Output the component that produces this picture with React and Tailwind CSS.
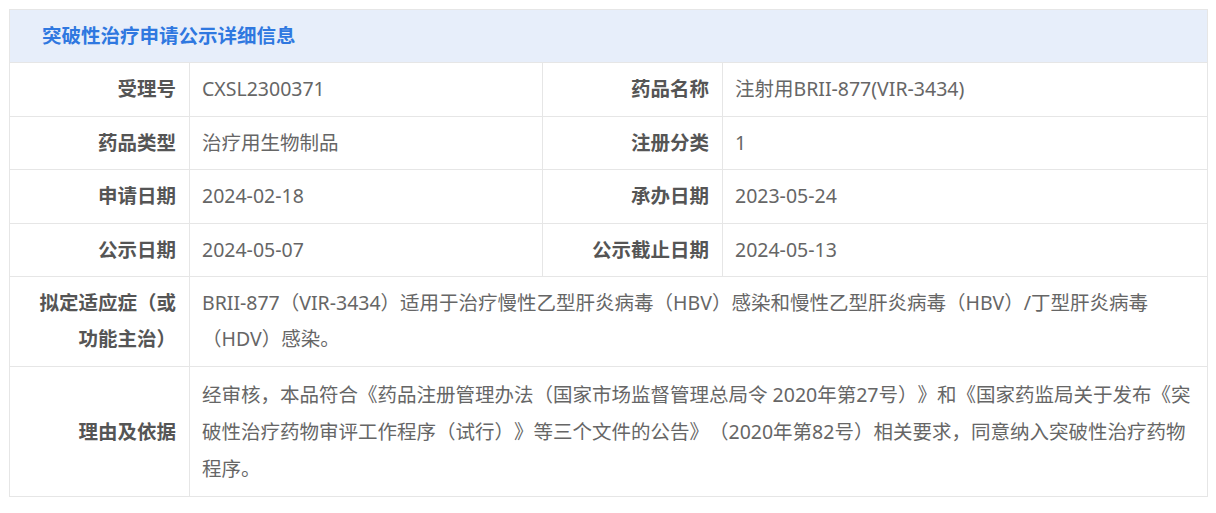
const font = { fontFamily: '"Noto Sans", "Noto Sans CJK SC", sans-serif' };

function Label({ children, tall }) {
  return (
    <th
      className={
        "w-[180px] border border-[#e6e6e6] px-[13px] text-right align-middle font-bold text-[#555] " +
        (tall ? "py-[9px] leading-[37px]" : "py-[8.25px] leading-[36px]")
      }
    >
      {children}
    </th>
  );
}

function Value({ children, colSpan, tall }) {
  return (
    <td
      colSpan={colSpan}
      className={
        "border border-[#e6e6e6] px-[12px] text-left align-middle text-[#666] " +
        (tall ? "py-[9px] leading-[37px]" : "py-[8.25px] leading-[36px]")
      }
    >
      {children}
    </td>
  );
}

export default function App() {
  return (
    <div
      className="min-h-screen bg-white pt-[9px] pl-[9px] pr-[8px] [text-spacing-trim:space-all]"
      style={font}
    >
      <table className="w-full border-collapse table-fixed text-[19.5px]">
        <colgroup>
          <col className="w-[180px]" />
          <col className="w-[353px]" />
          <col className="w-[180px]" />
          <col />
        </colgroup>
        <thead>
          <tr>
            <th
              colSpan={4}
              className="h-[53px] border border-[#e6e6e6] bg-[#e7eefa] pl-[32px] text-left font-bold text-[#2f78e0]"
            >
              突破性治疗申请公示详细信息
            </th>
          </tr>
        </thead>
        <tbody>
          <tr>
            <Label>受理号</Label>
            <Value>CXSL2300371</Value>
            <Label>药品名称</Label>
            <Value>注射用BRII-877(VIR-3434)</Value>
          </tr>
          <tr>
            <Label>药品类型</Label>
            <Value>治疗用生物制品</Value>
            <Label>注册分类</Label>
            <Value>1</Value>
          </tr>
          <tr>
            <Label>申请日期</Label>
            <Value>2024-02-18</Value>
            <Label>承办日期</Label>
            <Value>2023-05-24</Value>
          </tr>
          <tr>
            <Label>公示日期</Label>
            <Value>2024-05-07</Value>
            <Label>公示截止日期</Label>
            <Value>2024-05-13</Value>
          </tr>
          <tr>
            <Label>
              拟定适应症（或
              <br />
              功能主治）
            </Label>
            <Value colSpan={3}>
              BRII-877（VIR-3434）适用于治疗慢性乙型肝炎病毒（HBV）感染和慢性乙型肝炎病毒（HBV）/丁型肝炎病毒（HDV）感染。
            </Value>
          </tr>
          <tr>
            <Label tall>理由及依据</Label>
            <Value colSpan={3} tall>
              经审核，本品符合《药品注册管理办法（国家市场监督管理总局令 2020年第27号）》和《国家药监局关于发布《突破性治疗药物审评工作程序（试行）》等三个文件的公告》（2020年第82号）相关要求，同意纳入突破性治疗药物程序。
            </Value>
          </tr>
        </tbody>
      </table>
    </div>
  );
}
